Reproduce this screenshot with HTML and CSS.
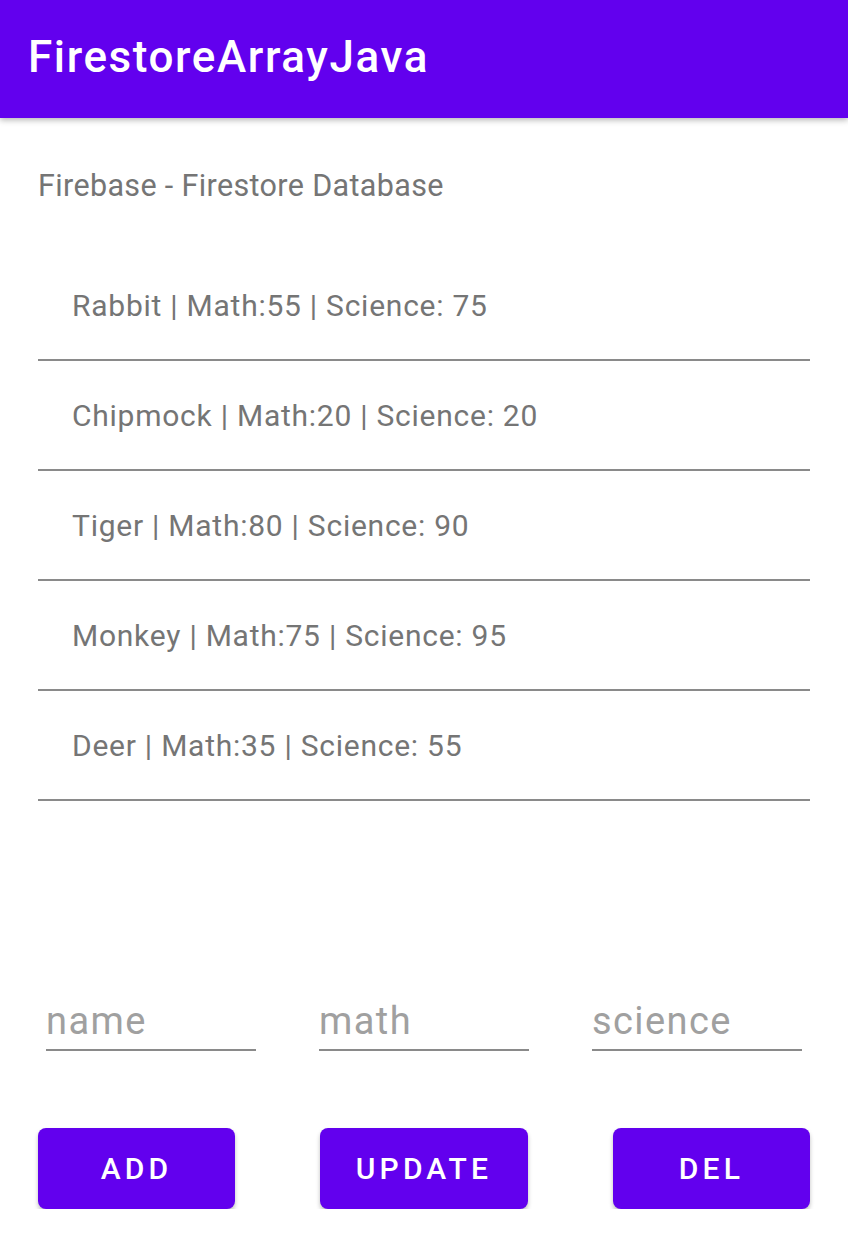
FILE: index.html
```html
<!DOCTYPE html>
<html>
<head>
<meta charset="utf-8">
<link rel="stylesheet" href="styles.css">
</head>
<body>
<header class="appbar"><h1 class="title">FirestoreArrayJava</h1></header>
<main class="content">
  <p class="subtitle">Firebase - Firestore Database</p>
  <ul class="list">
    <li class="row">Rabbit | Math:55 | Science: 75</li>
    <li class="row">Chipmock | Math:20 | Science: 20</li>
    <li class="row">Tiger | Math:80 | Science: 90</li>
    <li class="row">Monkey | Math:75 | Science: 95</li>
    <li class="row">Deer | Math:35 | Science: 55</li>
  </ul>
  <div class="inputs">
    <input class="field" placeholder="name">
    <input class="field" placeholder="math">
    <input class="field" placeholder="science">
  </div>
  <div class="buttons">
    <button class="btn btn-side">ADD</button>
    <button class="btn btn-mid">UPDATE</button>
    <button class="btn btn-side">DEL</button>
  </div>
</main>
</body>
</html>
```
FILE: styles.css
```css
html, body {
  margin: 0;
  padding: 0;
  background: #ffffff;
  font-family: Roboto, "Noto Sans", sans-serif;
}
.appbar {
  height: 118px;
  background: #6200ee;
  display: flex;
  align-items: center;
  padding-left: 28px;
  box-shadow: 0 2px 6px rgba(0,0,0,0.3);
  position: relative;
  z-index: 1;
}
.title {
  margin: 0;
  margin-top: -4px;
  color: #ffffff;
  font-size: 44px;
  font-weight: 500;
  letter-spacing: 1.6px;
}
.content {
  padding: 0 38px;
}
.subtitle {
  margin: 50px 0 0;
  color: #757575;
  font-size: 30.5px;
  line-height: 36px;
  letter-spacing: 0.35px;
}
.list {
  list-style: none;
  margin: 47px 0 0;
  padding: 0;
}
.row {
  height: 108px;
  border-bottom: 2px solid #8a8a8a;
  padding-left: 34px;
  display: flex;
  align-items: center;
  color: #757575;
  font-size: 30px;
  letter-spacing: 0.75px;
}
.inputs {
  display: flex;
  gap: 63px;
  margin-top: 198px;
  padding-left: 8px;
}
.field {
  width: 210px;
  box-sizing: border-box;
  border: none;
  border-bottom: 2px solid #8a8a8a;
  outline: none;
  padding: 0 0 6px 0;
  font-family: Roboto, "Noto Sans", sans-serif;
  font-size: 38px;
  letter-spacing: 1.4px;
  color: #222;
  background: transparent;
}
.field::placeholder {
  color: #a0a0a0;
}
.buttons {
  display: flex;
  justify-content: space-between;
  margin-top: 77px;
}
.btn {
  height: 81px;
  border: none;
  border-radius: 8px;
  background: #6200ee;
  color: #ffffff;
  font-family: Roboto, "Noto Sans", sans-serif;
  font-size: 30px;
  font-weight: 500;
  letter-spacing: 4.2px;
  box-shadow: 0 3px 4px rgba(0,0,0,0.25);
}
.btn-side { width: 197px; }
.btn-mid { width: 208px; }
```
